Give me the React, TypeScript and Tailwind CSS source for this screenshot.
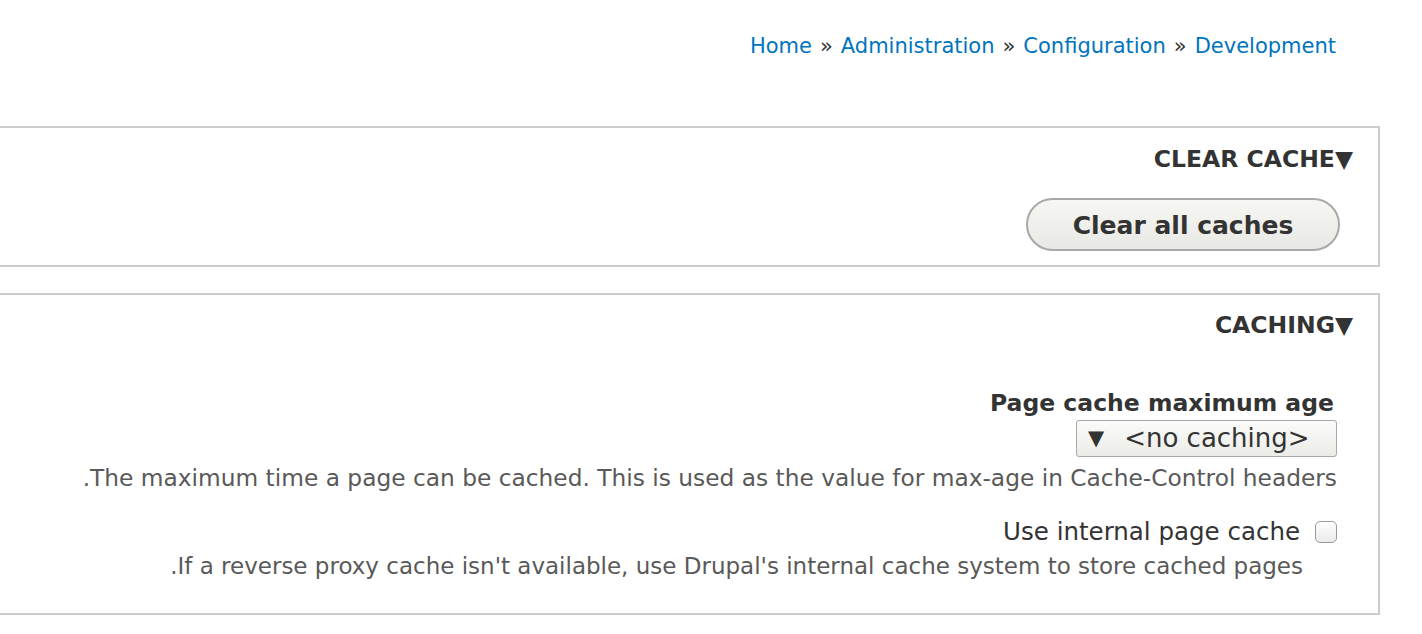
import React from "react";

const font = { fontFamily: '"DejaVu Sans", "Liberation Sans", sans-serif' };

export default function App() {
  return (
    <div
      className="h-[634px] w-full overflow-hidden bg-white text-[#333]"
      style={font}
    >
      <nav className="flex justify-end pr-[86px] pt-[32px] text-[21px] leading-[28px]">
        <a href="#" className="text-[#0074bd]">Home</a>
        <span className="mx-[8px]">»</span>
        <a href="#" className="text-[#0074bd]">Administration</a>
        <span className="mx-[8px]">»</span>
        <a href="#" className="text-[#0074bd]">Configuration</a>
        <span className="mx-[8px]">»</span>
        <a href="#" className="text-[#0074bd]">Development</a>
      </nav>

      <section className="mr-[42px] mt-[66px] h-[141px] border-2 border-l-0 border-[#ccc]">
        <div className="flex flex-col items-end pr-[25px] pt-[16px]">
          <h2 className="text-[23.5px] font-bold uppercase leading-[30px]">
            Clear cache▼
          </h2>
          <button className="mr-[13px] mt-[24px] h-[53px] w-[314px] rounded-full border-2 border-[#a8a8a8] bg-gradient-to-b from-[#f6f6f3] to-[#e8e8e4] pt-[3px] text-[25px] font-bold text-[#333]">
            Clear all caches
          </button>
        </div>
      </section>

      <section className="mr-[42px] mt-[26px] h-[322px] border-2 border-l-0 border-[#ccc]">
        <div className="flex flex-col items-end pr-[25px] pt-[15px]">
          <h2 className="text-[23.5px] font-bold uppercase leading-[30px]">
            Caching▼
          </h2>
          <div className="mr-[16px] mt-[48px] flex flex-col items-end">
            <label className="mr-[3px] text-[23.5px] font-bold leading-[30px]">
              Page cache maximum age
            </label>
            <div className="mt-[2px] flex h-[37px] w-[261px] items-center rounded-[3px] border border-[#a8a8a8] bg-gradient-to-b from-[#fbfbfa] to-[#ebebe8] pl-[11px] text-[26px] text-[#333]">
              <span className="text-[21px] leading-none">▼</span>
              <span className="ml-[20px]">&lt;no caching&gt;</span>
            </div>
            <p className="mt-[7px] text-[23.3px] leading-[28px] text-[#595959]">
              .The maximum time a page can be cached. This is used as the value
              for max-age in Cache-Control headers
            </p>
            <div className="mt-[25px] flex items-center">
              <span className="text-[24.5px] leading-[30px]">
                Use internal page cache
              </span>
              <span className="ml-[15px] h-[22px] w-[22px] rounded-[5px] border border-[#999] bg-gradient-to-b from-white to-[#eaeaea]" />
            </div>
            <p className="mr-[34px] mt-[5px] text-[23px] leading-[28px] text-[#595959]">
              .If a reverse proxy cache isn't available, use Drupal's internal
              cache system to store cached pages
            </p>
          </div>
        </div>
      </section>
    </div>
  );
}
